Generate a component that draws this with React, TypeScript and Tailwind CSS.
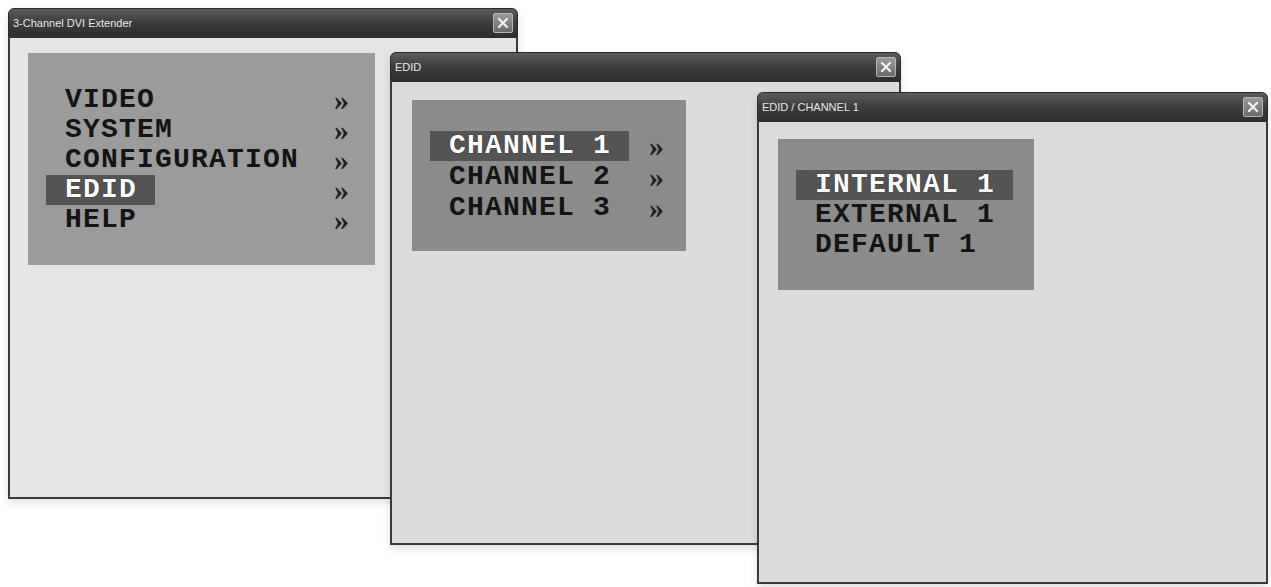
import type { ReactNode } from 'react'

// ── Dados dos menus OSD ──────────────────────────────────────────────────────
const MAIN_MENU = ['VIDEO', 'SYSTEM', 'CONFIGURATION', 'EDID', 'HELP']
const CHANNELS = ['CHANNEL 1', 'CHANNEL 2', 'CHANNEL 3']
const EDID_SOURCES = ['INTERNAL 1', 'EXTERNAL 1', 'DEFAULT 1']

// fonte estilo Courier; cai na Liberation Mono se não houver outra
const MONO = { fontFamily: '"Courier New", "Nimbus Mono PS", "FreeMono", "Liberation Mono", monospace' }

function CloseButton() {
  return (
    <div className="w-[20px] h-[20px] rounded-[2px] border border-[#b5b5b5] bg-gradient-to-b from-[#9a9a9a] to-[#6a6a6a] flex items-center justify-center">
      <svg width="12" height="12" viewBox="0 0 12 12">
        <path d="M2 2 L10 10 M10 2 L2 10" stroke="#f4f4f4" strokeWidth="2.2" strokeLinecap="round" />
      </svg>
    </div>
  )
}

interface WindowProps {
  title: string
  className: string
  body: string
  children: ReactNode
}

function Window({ title, className, body, children }: WindowProps) {
  return (
    <div className={`absolute flex flex-col rounded-t-[6px] shadow-[0_4px_8px_rgba(0,0,0,0.12)] ${className}`}>
      {/* barra de título */}
      <div className="h-[30px] shrink-0 rounded-t-[6px] bg-gradient-to-b from-[#5c5c5c] via-[#3c3c3c] to-[#2e2e2e] border border-[#2a2a2a] flex items-center justify-between pl-[4px] pr-[4px]">
        <span
          className="text-[11px] text-[#e8e8e8]"
          style={{ fontFamily: '"Liberation Sans", Arial, sans-serif' }}
        >
          {title}
        </span>
        <CloseButton />
      </div>
      {/* corpo */}
      <div className={`flex-1 border-x-2 border-b-2 border-[#3a3a3a] ${body}`}>{children}</div>
    </div>
  )
}

function Chevron() {
  return (
    <span
      className="text-[30px] font-bold leading-[24px] text-[#1e1e1e]"
      style={{ fontFamily: '"Liberation Serif", "Times New Roman", serif' }}
    >
      »
    </span>
  )
}

interface PanelProps {
  items: string[]
  active: string
  labelWidth: number
  rowH: string
  chevrons?: boolean
  className: string
}

function OsdPanel({ items, active, labelWidth, rowH, chevrons, className }: PanelProps) {
  return (
    <div className={`flex flex-col ${className}`}>
      {items.map((it) => (
        <div key={it} className={`flex items-center ${rowH}`}>
          <div className="shrink-0 flex" style={{ width: labelWidth }}>
            <span
              className={
                it === active
                  ? 'inline-block bg-[#545454] text-white pl-[19px] pr-[18px] h-[30px] text-[28px] tracking-[1.2px] font-bold leading-[30px] [text-shadow:0_0_1px_#000]'
                  : 'inline-block text-[#141414] pl-[19px] pr-[18px] h-[30px] text-[28px] tracking-[1.2px] font-bold leading-[30px]'
              }
              style={MONO}
            >
              {it}
            </span>
          </div>
          {chevrons && <Chevron />}
        </div>
      ))}
    </div>
  )
}

export default function App() {
  return (
    <div className="relative w-[1271px] h-[587px] bg-white overflow-hidden">
      {/* Janela principal */}
      <Window title="3-Channel DVI Extender" className="left-[8px] top-[8px] w-[510px] h-[491px]" body="bg-[#e5e5e5]">
        <div className="pt-[15px] pl-[18px]">
          <OsdPanel
            items={MAIN_MENU}
            active="EDID"
            labelWidth={288}
            rowH="h-[30px]"
            chevrons
            className="w-[347px] h-[212px] bg-[#9b9b9b] pt-[32px] pl-[18px]"
          />
        </div>
      </Window>

      {/* Submenu EDID */}
      <Window title="EDID" className="left-[390px] top-[52px] w-[511px] h-[493px]" body="bg-[#dcdcdc]">
        <div className="pt-[18px] pl-[20px]">
          <OsdPanel
            items={CHANNELS}
            active="CHANNEL 1"
            labelWidth={219}
            rowH="h-[31px]"
            chevrons
            className="w-[274px] h-[151px] bg-[#8b8b8b] pt-[30px] pl-[18px]"
          />
        </div>
      </Window>

      {/* Submenu EDID / CHANNEL 1 */}
      <Window title="EDID / CHANNEL 1" className="left-[757px] top-[92px] w-[511px] h-[492px]" body="bg-[#dcdcdc]">
        <div className="pt-[17px] pl-[19px]">
          <OsdPanel
            items={EDID_SOURCES}
            active="INTERNAL 1"
            labelWidth={230}
            rowH="h-[30px]"
            className="w-[256px] h-[151px] bg-[#8b8b8b] pt-[31px] pl-[18px]"
          />
        </div>
      </Window>
    </div>
  )
}
